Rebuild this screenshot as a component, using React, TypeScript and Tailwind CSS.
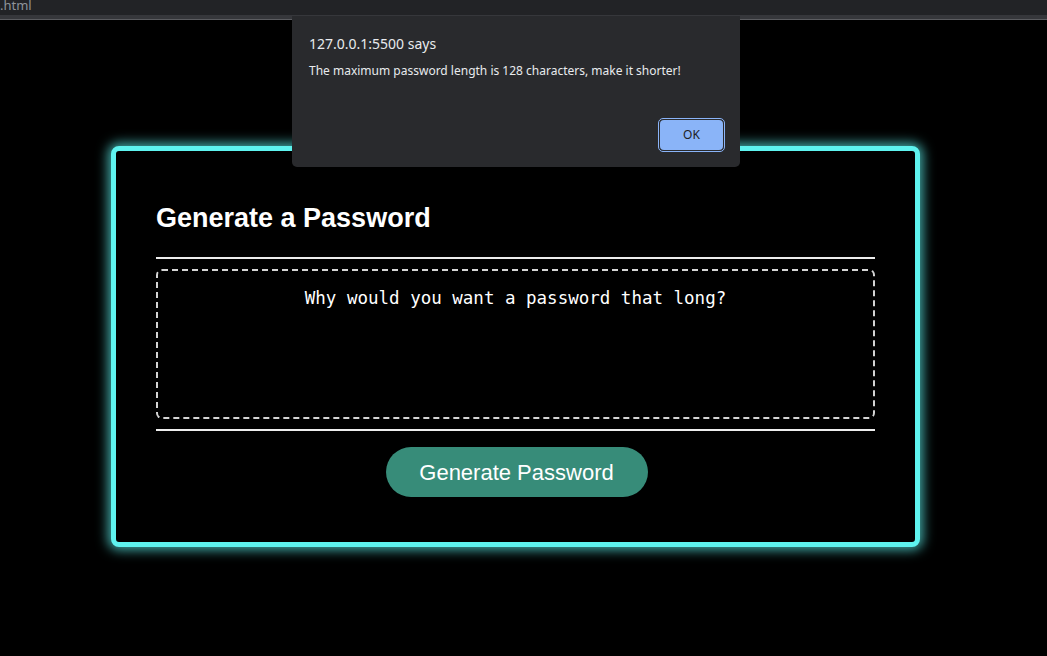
export default function App() {
  return (
    <div className="relative min-h-[656px] w-full overflow-hidden bg-black font-['Liberation_Sans',Arial,sans-serif]">
      {/* Browser top strip */}
      <div className="h-[15px] overflow-hidden bg-[#222326]">
        <span className="-mt-[3px] block pl-0 font-['Noto_Sans',sans-serif] text-[13px] leading-[16px] text-[#8f949a]">
          .html
        </span>
      </div>
      <div className="h-[4px] bg-[#36373b]" />
      <div className="h-px bg-[#5c5d61]" />

      {/* Card */}
      <div className="ml-[111px] mt-[126px] w-[809px] rounded-[8px] border-[5px] border-[#5ef3ef] bg-black shadow-[0_0_12px_3px_rgba(94,243,239,0.7)]">
        <div className="rounded-[4px] px-10 pb-[45px] pt-[52px]">
          <h2 className="text-[27px] font-bold leading-[31px] text-white">Generate a Password</h2>

          <div className="mt-[23px] h-[2px] bg-[#ededed]" />

          <div className="mt-[10px] h-[150px] rounded-[6px] border-2 border-dashed border-[#d4d4d4] pt-[17px] text-center font-['DejaVu_Sans_Mono',monospace] text-[17.5px] leading-[21px] text-white">
            Why would you want a password that long?
          </div>

          <div className="mt-[10px] h-[2px] bg-[#ededed]" />

          <div className="mt-[16px] flex justify-center">
            <button className="ml-[2px] h-[50px] w-[262px] rounded-full bg-[#378c79] text-[22px] text-white">
              Generate Password
            </button>
          </div>
        </div>
      </div>

      {/* Alert dialog */}
      <div className="absolute left-[292px] top-[16px] h-[151px] w-[448px] rounded-b-[5px] bg-[#292a2d] px-[17px] pt-[17px] font-['Noto_Sans',sans-serif] text-[#e8eaed]">
        <div className="text-[14px] leading-[22px]">127.0.0.1:5500 says</div>
        <div className="mt-[7px] text-[12px] leading-[17px]">
          The maximum password length is 128 characters, make it shorter!
        </div>
        <div className="absolute bottom-[15px] right-[15px] rounded-[5px] border border-[#8ab4f8] p-px">
          <button className="flex h-[30px] w-[63px] items-center justify-center rounded-[4px] bg-[#8ab4f8] text-[12px] text-[#202124]">
            OK
          </button>
        </div>
      </div>
    </div>
  );
}
